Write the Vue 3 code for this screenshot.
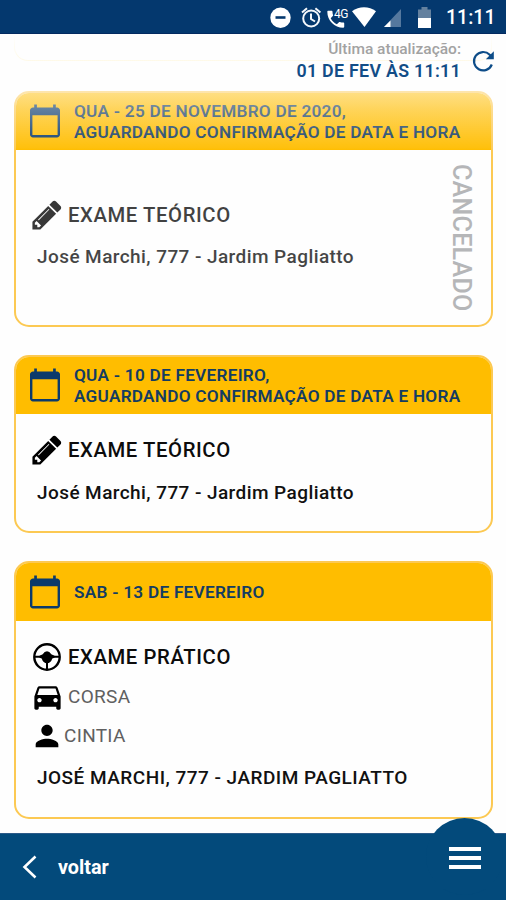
<script setup>
const address = 'José Marchi, 777 - Jardim Pagliatto'
const exams = [
  {
    id: 1,
    date: ['QUA - 25 DE NOVEMBRO DE 2020,', 'AGUARDANDO CONFIRMAÇÃO DE DATA E HORA'],
    title: 'EXAME TEÓRICO',
    address,
    kind: 'cancelled',
  },
  {
    id: 2,
    date: ['QUA - 10 DE FEVEREIRO,', 'AGUARDANDO CONFIRMAÇÃO DE DATA E HORA'],
    title: 'EXAME TEÓRICO',
    address,
    kind: 'theory',
  },
  {
    id: 3,
    date: ['SAB - 13 DE FEVEREIRO'],
    title: 'EXAME PRÁTICO',
    car: 'CORSA',
    person: 'CINTIA',
    address: 'JOSÉ MARCHI, 777 - JARDIM PAGLIATTO',
    kind: 'practice',
  },
]
</script>

<template>
  <div class="screen">
    <header class="status">
      <svg class="status-icons" width="170" height="34" viewBox="266 0 170 34">
        <circle cx="280.5" cy="17.7" r="10.2" fill="#fff" />
        <path d="M275.500 17.500h10" stroke="#04386e" stroke-width="2.600" />
        <g fill="none" stroke="#f4f7fb" stroke-width="2">
          <circle cx="311.200" cy="18.500" r="8" />
          <path d="M311 13.500v5.500l4 2.500M302 12.500l5-4.200M320.400 12.500l-5-4.200" />
        </g>
        <path
          transform="translate(324.500 8) scale(.94)"
          fill="#fff"
          d="M6.600 10.800c1.440 2.830 3.760 5.140 6.590 6.590l2.200-2.200c.27-.27.67-.36 1.020-.24 1.120.37 2.330.57 3.570.57.550 0 1 .45 1 1V20c0 .55-.45 1-1 1C10.600 21 3 13.400 3 4c0-.55.450-1 1-1h3.500c.55 0 1 .45 1 1 0 1.250.2 2.450.57 3.570.11.350.03.740-.25 1.020z"
        />
        <text x="334" y="17.500" class="network">4G</text>
        <path d="M352 11.300C359 6 369 6 376 11.300L364.500 27z" fill="#fff" />
        <path d="M401 9v18h-17z" fill="#55789e" />
        <path d="M390.500 20.500V27h-6.500z" fill="#fff" />
        <path d="M418 9.500h3.500V7h6v2.500h3.500V18h-13z" fill="#64819f" />
        <path d="M418 18h13v10h-13z" fill="#fff" />
      </svg>
      <span class="clock">11:11</span>
    </header>

    <main class="content">
      <div class="past-card"></div>
      <section class="list">
        <article v-for="exam in exams" :key="exam.id" class="card" :class="exam.kind">
          <div class="card-head">
            <svg class="calendar" width="36" height="36" viewBox="0 0 24 24">
              <path
                fill="#0b3a6b"
                fill-rule="evenodd"
                d="M20 3h-.8V1h-1.800v2H6.600V1H4.800v2H4c-1.100 0-2 .9-2 2v16c0 1.100.9 2 2 2h16c1.100 0 2-.9 2-2V5c0-1.100-.9-2-2-2zm.4 18.300H3.600V8.200h16.800v13.100z"
              />
            </svg>
            <div class="date">
              <div v-for="line in exam.date" :key="line"><span>{{ line }}</span></div>
            </div>
          </div>
          <div class="card-body">
            <div class="row title">
              <svg v-if="exam.kind !== 'practice'" class="pencil" width="34" height="34" viewBox="0 0 1792 1792">
                <path
                  d="M491 1536l91-91-235-235-91 91v107h128v128h107zm523-928q0-22-22-22-10 0-17 7l-542 542q-7 7-7 17 0 22 22 22 10 0 17-7l542-542q7-7 7-17zm-54-192l416 416-832 832h-416v-416zm683 96q0 53-37 90l-166 166-416-416 166-165q36-38 90-38 53 0 91 38l235 234q37 39 37 91z"
                />
              </svg>
              <svg v-else class="wheel" width="30" height="30" viewBox="0 0 30 30">
                <circle cx="15" cy="15" r="12.700" fill="none" stroke="#000" stroke-width="2.400" />
                <path d="M2.500 14.800h25M15 16v11.500" stroke="#000" stroke-width="2" />
                <path d="M7.500 13.800l3.200-1.600q1.800-3 4.300-3t4.300 3l3.200 1.600v2l-2.200.6q-1.500 4.800-5.300 4.800t-5.300-4.800l-2.200-.6z" />
              </svg>
              <span>{{ exam.title }}</span>
            </div>
            <div v-if="exam.car" class="row car">
              <svg width="35" height="35" viewBox="0 0 24 24">
                <path
                  d="M18.920 6.010C18.720 5.420 18.160 5 17.500 5h-11c-.66 0-1.210.42-1.420 1.010L3 12v8c0 .55.450 1 1 1h1c.55 0 1-.45 1-1v-1h12v1c0 .55.450 1 1 1h1c.55 0 1-.45 1-1v-8l-2.080-5.990zM6.500 16c-.83 0-1.500-.67-1.500-1.500S5.670 13 6.500 13s1.500.67 1.500 1.500S7.330 16 6.500 16zm11 0c-.83 0-1.500-.67-1.500-1.500s.67-1.500 1.500-1.500 1.500.67 1.500 1.500-.67 1.500-1.500 1.500zM5 11l1.500-4.500h11L19 11H5z"
                />
              </svg>
              <span>{{ exam.car }}</span>
            </div>
            <div v-if="exam.person" class="row person">
              <svg width="34" height="34" viewBox="0 0 24 24">
                <path d="M12 12c2.210 0 4-1.790 4-4s-1.790-4-4-4-4 1.790-4 4 1.790 4 4 4zm0 2c-2.670 0-8 1.340-8 4v2h16v-2c0-2.660-5.330-4-8-4z" />
              </svg>
              <span>{{ exam.person }}</span>
            </div>
            <p class="address"><span>{{ exam.address }}</span></p>
          </div>
          <span v-if="exam.kind === 'cancelled'" class="stamp">CANCELADO</span>
        </article>
      </section>
      <div class="fade"></div>
      <div class="update">
        <div class="update-text">
          <div class="label"><span>Última atualização:</span></div>
          <div class="when"><span>01 DE FEV ÀS 11:11</span></div>
        </div>
        <svg class="refresh" width="24" height="24" viewBox="0 0 24 24">
          <path d="M20.800 15.500A9.200 9.200 0 1 1 18.700 5.700L21 8.200" fill="none" stroke="#0d4c88" stroke-width="2.200" />
          <path d="M22.800 2.300v8h-8z" fill="#0d4c88" />
        </svg>
      </div>
    </main>

    <footer class="footer">
      <svg class="back" width="16" height="26" viewBox="0 0 16 26">
        <path d="M13.500 2.500L2.500 13l11 10.500" fill="none" stroke="#fff" stroke-width="2.600" />
      </svg>
      <span class="back-label">voltar</span>
      <button class="menu" aria-label="Menu">
        <i></i><i></i><i></i>
      </button>
    </footer>
  </div>
</template>

<style>
body {
  background: #fefefe;
}
</style>

<style scoped>
.screen {
  width: 506px;
  height: 900px;
  display: flex;
  flex-direction: column;
  overflow: hidden;
  background: #fefefe;
  font-family: Roboto, 'Liberation Sans', sans-serif;
  font-weight: 500;
  white-space: nowrap;
}
.status {
  height: 34px;
  flex: none;
  box-sizing: border-box;
  display: flex;
  align-items: center;
  justify-content: flex-end;
  padding-right: 11px;
  gap: 10px;
  background: #04386e;
  border-bottom: 1px solid #032a60;
}
.status-icons {
  flex: none;
}
.network {
  font-size: 12px;
  font-weight: 400;
  letter-spacing: -0.400px;
  fill: #fff;
}
.clock {
  width: 49px;
  color: #fff;
  font-size: 19.500px;
  letter-spacing: 0;
  padding-top: 2px;
}
.content {
  position: relative;
  flex: 1;
  min-height: 0;
  display: flex;
  flex-direction: column;
}
.past-card {
  height: 27px;
  flex: none;
  box-sizing: border-box;
  margin: 0 14px;
  border: 1.500px solid #ffdc55;
  border-top: 0;
  border-radius: 0 0 14px 14px;
}
.list {
  display: flex;
  flex-direction: column;
  gap: 28px;
  padding: 30px 13px 0 14px;
}
.card {
  position: relative;
  box-sizing: border-box;
  flex: none;
  border: 2px solid #fcc953;
  border-radius: 15px;
  overflow: hidden;
  background: #fefefe;
}
.cancelled {
  height: 236px;
}
.theory {
  height: 178px;
}
.practice {
  height: 258px;
}
.card-head {
  height: 57px;
  display: flex;
  align-items: center;
  gap: 11px;
  padding-left: 11px;
  background: #ffbd00;
  color: #143c62;
}
.calendar {
  flex: none;
  margin-bottom: 2px;
}
.practice .card-head {
  height: 58px;
}
.practice .calendar {
  margin-bottom: 0;
}
.date {
  font-size: 17.200px;
  line-height: 21px;
  font-weight: 600;
  letter-spacing: 0.260px;
}
.card-body {
  padding-left: 14px;
}
.row {
  display: flex;
  align-items: center;
}
.title {
  height: 34px;
  font-size: 20.300px;
  letter-spacing: 0.600px;
  color: #0c0c0c;
}
.pencil {
  margin-right: 4px;
}
.wheel {
  margin: 0 6px 0 2px;
}
.address {
  margin: 0;
  padding-left: 7px;
  font-size: 19px;
  letter-spacing: 0.420px;
  line-height: 24px;
  color: #111;
}
.cancelled .card-body {
  padding-top: 48px;
  opacity: 0.78;
}
.cancelled .address {
  margin-top: 13px;
}
.theory .card-body {
  padding-top: 19px;
}
.theory .address {
  margin-top: 14px;
}
.practice .card-body {
  padding-top: 19px;
}
.car,
.person {
  font-size: 19px;
  font-weight: 400;
  letter-spacing: 0.300px;
  color: #606060;
}
.car {
  height: 39px;
  margin-top: 3px;
}
.car span {
  margin-left: 3px;
}
.person {
  height: 39px;
}
.practice .address {
  margin-top: 11px;
  letter-spacing: 0.480px;
}
.stamp {
  position: absolute;
  right: 17px;
  top: 71px;
  writing-mode: vertical-rl;
  font-size: 25px;
  letter-spacing: 0.300px;
  line-height: 26px;
  color: #b5b6b8;
}
.fade {
  position: absolute;
  inset: 0 0 auto 0;
  height: 116px;
  background: linear-gradient(
    rgba(254, 254, 254, 1) 0,
    rgba(254, 254, 254, 0.87) 27px,
    rgba(254, 254, 254, 0.52) 58px,
    rgba(254, 254, 254, 0.340) 77px,
    rgba(254, 254, 254, 0.050) 114px,
    rgba(254, 254, 254, 0) 116px
  );
}
.update {
  position: absolute;
  top: 5px;
  right: 11px;
  display: flex;
  align-items: center;
  gap: 10px;
}
.update-text {
  text-align: right;
  line-height: 21px;
}
.label {
  color: #a2a2a2;
  font-size: 15.500px;
}
.when {
  color: #124d87;
  font-size: 17.800px;
  font-weight: 600;
  letter-spacing: 0.300px;
}
.refresh {
  margin-top: 1px;
}
.footer {
  position: relative;
  height: 67px;
  flex: none;
  box-sizing: border-box;
  display: flex;
  align-items: center;
  padding-left: 22px;
  gap: 20px;
  background: #034a7b;
  border-top: 1px solid #2c5a88;
}
.back-label {
  color: #fff;
  font-size: 19.800px;
  font-weight: 700;
}
.menu {
  position: absolute;
  right: 3px;
  top: -16px;
  width: 77px;
  height: 77px;
  border: 0;
  border-radius: 50%;
  padding: 2px 0 0;
  background: #034a7b;
  display: flex;
  flex-direction: column;
  align-items: center;
  justify-content: center;
  gap: 5px;
}
.menu i {
  width: 32px;
  height: 4px;
  background: #fff;
}
</style>
